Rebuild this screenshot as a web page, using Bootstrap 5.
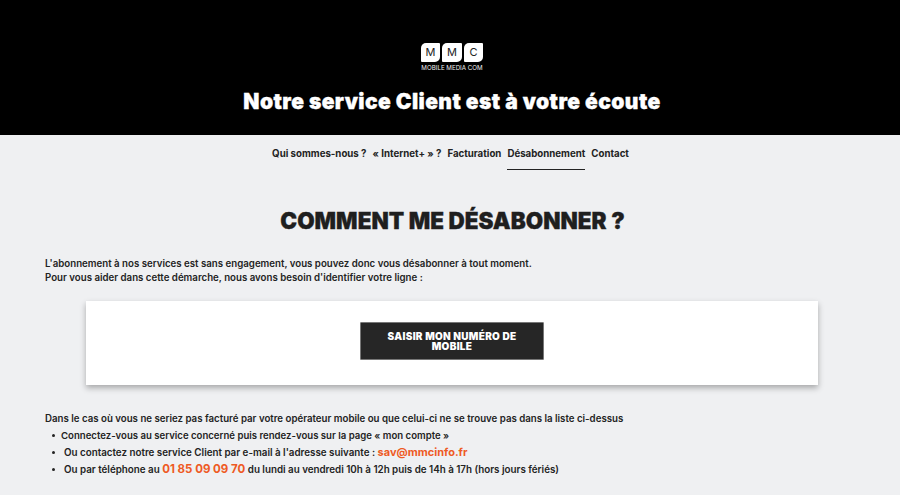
<!DOCTYPE html>
<html lang="fr">
<head>
<meta charset="utf-8">
<title>MMC</title>
<link rel="stylesheet" href="https://cdn.jsdelivr.net/npm/bootstrap@5.3.0/dist/css/bootstrap.min.css">
<style>
html,body{height:495px;overflow:hidden}
body{background:#eff0f2;color:#232323;font-family:Inter,"Liberation Sans",sans-serif;font-size:9.7px;font-weight:600;line-height:13.5px}
.hero{background:#000;height:135px;padding:43px 0 0 4px}
.logo-tiles{gap:2px;height:19px}
.logo-tile{width:19.5px;height:19px;background:#fff;color:#222;border-radius:5px 1px 5px 1px;font-size:11px;font-weight:400;line-height:19px;text-align:center}
.logo-cap{color:#eee;font-size:6.2px;font-weight:400;line-height:8px;margin-top:2px;white-space:nowrap}
.hero-title{color:#fff;font-size:21px;font-weight:900;line-height:24px;margin:18px 0 0;letter-spacing:.42px;-webkit-text-stroke:.35px #fff}
.menu{gap:6px;height:35px;padding:12px 0 0 1px;font-size:9.7px;line-height:14px;font-weight:700}
.menu a{color:#232323;text-decoration:none;display:block;height:23px;white-space:nowrap}
.menu a.on{border-bottom:1.5px solid #232323}
.page-title{font-size:22.5px;font-weight:900;line-height:26px;text-align:center;margin:38px 0 23px;padding-left:5px;color:#1f1f1f;-webkit-text-stroke:.3px #1f1f1f}
.wrap{padding:0 45px}
.intro{margin:0 0 17px}
.panel{margin:0 37px 27px 41px;height:84px;padding-top:21px;background:#fff;border-radius:0;box-shadow:0 3px 6px rgba(0,0,0,.3)}
.cta{width:184px;height:38px;background:#262626;color:#fff;border:1px solid #777;border-radius:1px;font-size:10px;font-weight:900;line-height:10px;padding:0 20px;letter-spacing:.3px}
.lines{margin:0;padding:0;list-style:none}
.lines li{line-height:13.5px;height:17px;padding-left:19px;position:relative;font-size:9.8px}
.lines li::before{content:"";position:absolute;left:7px;top:5px;width:3px;height:3px;border-radius:50%;background:#232323}
.lines li.tight{padding-left:16px;font-size:9.6px}
.lead-line{margin:0 0 3.5px}
.hot{color:#ee5a24;font-weight:700;font-size:11px}
.hot-big{font-size:11.5px}
</style>
</head>
<body>
<header class="hero text-center">
  <div class="d-flex flex-column align-items-center">
    <div class="d-flex logo-tiles"><span class="logo-tile">M</span><span class="logo-tile">M</span><span class="logo-tile">C</span></div>
    <div class="logo-cap">MOBILE MEDIA COM</div>
  </div>
  <h1 class="hero-title">Notre service Client est à votre écoute</h1>
</header>
<nav class="d-flex justify-content-center menu">
  <a href="#">Qui sommes-nous ?</a>
  <a href="#">« Internet+ » ?</a>
  <a href="#">Facturation</a>
  <a href="#" class="on">Désabonnement</a>
  <a href="#">Contact</a>
</nav>
<main class="wrap">
  <h2 class="page-title">COMMENT ME DÉSABONNER ?</h2>
  <p class="intro">L'abonnement à nos services est sans engagement, vous pouvez donc vous désabonner à tout moment.<br>Pour vous aider dans cette démarche, nous avons besoin d'identifier votre ligne :</p>
  <section class="panel d-flex align-items-start justify-content-center">
    <button type="button" class="btn cta">SAISIR MON NUMÉRO DE MOBILE</button>
  </section>
  <p class="lead-line">Dans le cas où vous ne seriez pas facturé par votre opérateur mobile ou que celui-ci ne se trouve pas dans la liste ci-dessus</p>
  <ul class="lines">
    <li class="tight">Connectez-vous au service concerné puis rendez-vous sur la page « mon compte »</li>
    <li>Ou contactez notre service Client par e-mail à l'adresse suivante : <span class="hot">sav@mmcinfo.fr</span></li>
    <li>Ou par téléphone au <span class="hot hot-big">01 85 09 09 70</span> du lundi au vendredi 10h à 12h puis de 14h à 17h (hors jours fériés)</li>
  </ul>
</main>
<script src="https://cdn.jsdelivr.net/npm/bootstrap@5.3.0/dist/js/bootstrap.bundle.min.js"></script>
</body>
</html>
